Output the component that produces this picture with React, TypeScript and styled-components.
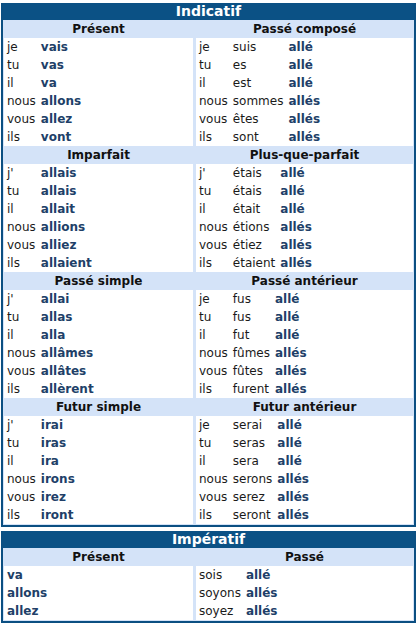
import React from "react";
import styled, { createGlobalStyle } from "styled-components";

const GlobalStyle = createGlobalStyle`
  body {
    margin: 0;
    background: #fff;
    font-family: "DejaVu Sans", Verdana, sans-serif;
    font-size: 12px;
    color: #1a1a1a;
  }
`;

const Page = styled.div`
  padding: 3px 1px 0 1px;
  width: 416px;
  box-sizing: border-box;
  display: flex;
  flex-direction: column;
  gap: 4px;
`;

const Panel = styled.section`
  box-sizing: border-box;
  width: 415px;
  border: 2px solid #0b4f82;
  border-top-width: 0;
  background: #d4e3f8;
  padding: 0 1px 1px 1px;
  display: grid;
  grid-template-columns: 189px 1fr;
  column-gap: 3px;
`;

const Title = styled.div<{ $h: number }>`
  grid-column: 1 / -1;
  margin: 0 -1px;
  height: ${(p) => p.$h}px;
  line-height: ${(p) => p.$h}px;
  background: #0b5185;
  color: #fff;
  font-weight: bold;
  font-size: 14px;
  text-align: center;
`;

const SubHead = styled.div`
  height: 18px;
  line-height: 18px;
  font-weight: bold;
  text-align: center;
  color: #111;
`;

const Cell = styled.div<{ $cols: number }>`
  background: #fff;
  padding-left: 3px;
  display: grid;
  grid-template-columns: ${(p) =>
    p.$cols === 1 ? "1fr" : p.$cols === 2 ? "auto 1fr" : "auto auto 1fr"};
  column-gap: 5px;
  grid-auto-rows: 18px;
  line-height: 18px;
  align-content: start;
`;

const Plain = styled.span`
  white-space: nowrap;
`;

const Verb = styled.span`
  font-weight: bold;
  color: #213f68;
  white-space: nowrap;
`;

type Tense = { title: string; rows: string[][] };

const indicatif: [Tense, Tense][] = [
  [
    {
      title: "Présent",
      rows: [["je", "vais"], ["tu", "vas"], ["il", "va"], ["nous", "allons"], ["vous", "allez"], ["ils", "vont"]],
    },
    {
      title: "Passé composé",
      rows: [
        ["je", "suis", "allé"], ["tu", "es", "allé"], ["il", "est", "allé"],
        ["nous", "sommes", "allés"], ["vous", "êtes", "allés"], ["ils", "sont", "allés"],
      ],
    },
  ],
  [
    {
      title: "Imparfait",
      rows: [["j'", "allais"], ["tu", "allais"], ["il", "allait"], ["nous", "allions"], ["vous", "alliez"], ["ils", "allaient"]],
    },
    {
      title: "Plus-que-parfait",
      rows: [
        ["j'", "étais", "allé"], ["tu", "étais", "allé"], ["il", "était", "allé"],
        ["nous", "étions", "allés"], ["vous", "étiez", "allés"], ["ils", "étaient", "allés"],
      ],
    },
  ],
  [
    {
      title: "Passé simple",
      rows: [["j'", "allai"], ["tu", "allas"], ["il", "alla"], ["nous", "allâmes"], ["vous", "allâtes"], ["ils", "allèrent"]],
    },
    {
      title: "Passé antérieur",
      rows: [
        ["je", "fus", "allé"], ["tu", "fus", "allé"], ["il", "fut", "allé"],
        ["nous", "fûmes", "allés"], ["vous", "fûtes", "allés"], ["ils", "furent", "allés"],
      ],
    },
  ],
  [
    {
      title: "Futur simple",
      rows: [["j'", "irai"], ["tu", "iras"], ["il", "ira"], ["nous", "irons"], ["vous", "irez"], ["ils", "iront"]],
    },
    {
      title: "Futur antérieur",
      rows: [
        ["je", "serai", "allé"], ["tu", "seras", "allé"], ["il", "sera", "allé"],
        ["nous", "serons", "allés"], ["vous", "serez", "allés"], ["ils", "seront", "allés"],
      ],
    },
  ],
];

const imperatif: [Tense, Tense] = [
  { title: "Présent", rows: [["va"], ["allons"], ["allez"]] },
  { title: "Passé", rows: [["sois", "allé"], ["soyons", "allés"], ["soyez", "allés"]] },
];

// last word of each row is the conjugated form, the rest is plain text
const Conj = ({ tense }: { tense: Tense }) => (
  <Cell $cols={tense.rows[0].length}>
    {tense.rows.map((row, i) =>
      row.map((word, j) =>
        j === row.length - 1 ? (
          <Verb key={`${i}-${j}`}>{word}</Verb>
        ) : (
          <Plain key={`${i}-${j}`}>{word}</Plain>
        )
      )
    )}
  </Cell>
);

const Block = ({ pair }: { pair: [Tense, Tense] }) => (
  <>
    <SubHead>{pair[0].title}</SubHead>
    <SubHead>{pair[1].title}</SubHead>
    <Conj tense={pair[0]} />
    <Conj tense={pair[1]} />
  </>
);

export default function App() {
  return (
    <>
      <GlobalStyle />
      <Page>
        <Panel>
          <Title $h={17}>Indicatif</Title>
          {indicatif.map((pair) => (
            <Block key={pair[0].title} pair={pair} />
          ))}
        </Panel>
        <Panel>
          <Title $h={17}>Impératif</Title>
          <Block pair={imperatif} />
        </Panel>
      </Page>
    </>
  );
}
